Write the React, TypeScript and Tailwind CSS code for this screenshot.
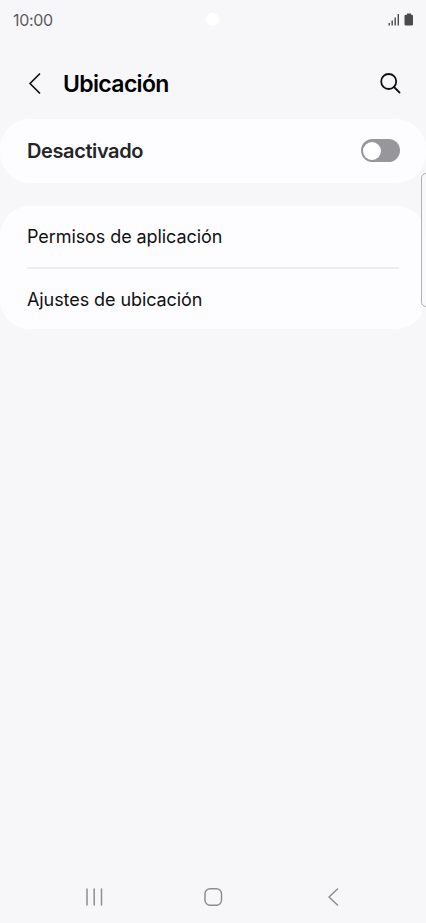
function StatusBar() {
  return (
    <div className="relative flex h-10 items-center justify-between pl-[13px] pr-3">
      <span className="text-[16px] leading-none tracking-[-0.3px] text-[#5c5c5e]">10:00</span>
      {/* Camera cutout */}
      <span className="absolute left-[206px] top-[13px] size-[13px] rounded-full bg-white" />
      <svg width="26" height="14" viewBox="0 0 26 14" fill="#4a4a4c">
        <rect x="0.5" y="10" width="1.4" height="2.5" />
        <rect x="3.5" y="7.5" width="1.4" height="5" />
        <rect x="6.5" y="4.5" width="1.4" height="8" />
        <rect x="9.6" y="1" width="1.4" height="11.5" />
        <path d="M19 0.500h4v1.200h0.700q1.300 0 1.300 1.300v8.200q0 1.300-1.300 1.300h-5.900q-1.300 0-1.300-1.300V3q0-1.300 1.300-1.300h1.200z" />
      </svg>
    </div>
  );
}

export default function App() {
  return (
    <div className="relative flex h-[923px] w-[426px] flex-col overflow-hidden bg-[#f7f7f9] font-[Inter,sans-serif]">
      <StatusBar />
      <header className="flex h-[79px] items-center pl-7 pr-6 pt-2">
        <svg
          width="14"
          height="22"
          viewBox="0 0 14 22"
          fill="none"
          stroke="#101010"
          strokeWidth="1.7"
          strokeLinecap="round"
          strokeLinejoin="round"
        >
          <path d="M11.500 1 2 10.500 11.500 20" />
        </svg>
        <h1 className="ml-[21px] flex-1 pt-0.5 text-[23px] font-semibold tracking-[-0.65px]">
          Ubicación
        </h1>
        <svg
          width="22"
          height="22"
          viewBox="0 0 22 22"
          fill="none"
          stroke="#101010"
          strokeWidth="1.8"
          strokeLinecap="round"
        >
          <circle cx="8.700" cy="8.500" r="7.500" />
          <path d="m14 14 5.500 5.500" />
        </svg>
      </header>

      <main>
        <section className="flex h-16 items-center justify-between rounded-[30px] bg-[#fdfdff] pl-[27px] pr-[26px]">
          <span className="text-[20px] font-semibold tracking-[-0.4px] text-[#252528]">
            Desactivado
          </span>
          <span className="mb-px flex h-[23px] w-[39px] items-center rounded-full bg-[#97979b] p-0.5">
            <span className="size-[18px] rounded-full bg-white" />
          </span>
        </section>
        <section className="mt-[23px] rounded-[30px] bg-[#fdfdff] px-[27px] text-[18px] tracking-[-0.08px] text-[#101012]">
          <div className="flex h-[63px] items-center border-b-2 border-[#ededef]">
            Permisos de aplicación
          </div>
          <div className="flex h-[60px] items-center pt-px">Ajustes de ubicación</div>
        </section>
      </main>

      {/* Edge panel handle */}
      <div className="absolute -right-2 top-[173px] h-[134px] w-[13px] rounded-[5px] border border-[#b0b0b2] bg-[#f8f8fa]/70" />

      <nav className="mt-auto flex h-[52px] items-center pl-[86px]">
        <svg width="17" height="18" viewBox="0 0 17 18" stroke="#8e8e91" strokeWidth="1.5" strokeLinecap="round">
          <path d="M1 1v16M8.200 1v16M15.500 1v16" />
        </svg>
        <svg
          className="ml-[101px]"
          width="19"
          height="18"
          viewBox="0 0 19 18"
          fill="none"
          stroke="#8e8e91"
          strokeWidth="1.5"
        >
          <rect x="1" y="0.800" width="16.500" height="16.500" rx="5" />
        </svg>
        <svg
          className="ml-[104px]"
          width="12"
          height="18"
          viewBox="0 0 12 18"
          fill="none"
          stroke="#8e8e91"
          strokeWidth="1.5"
          strokeLinecap="round"
          strokeLinejoin="round"
        >
          <path d="M10.500 1 2 9l8.500 8" />
        </svg>
      </nav>
    </div>
  );
}
